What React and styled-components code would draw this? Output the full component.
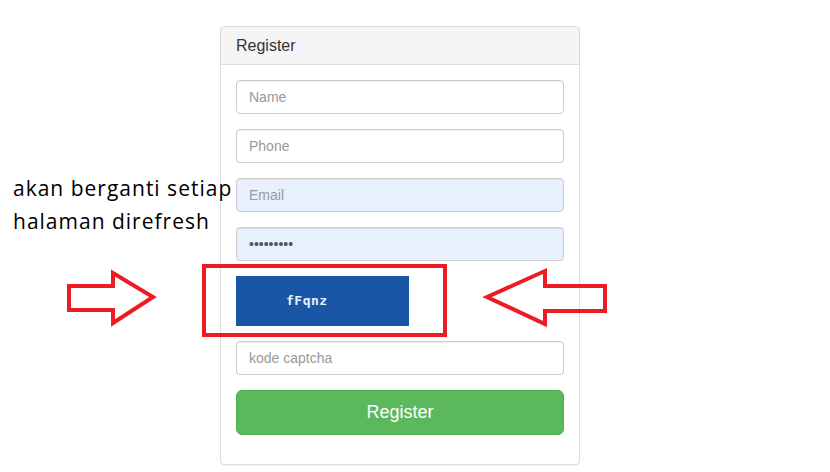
import React from "react";
import styled, { createGlobalStyle } from "styled-components";

const Global = createGlobalStyle`
  html, body { margin: 0; padding: 0; background: #fff; }
  body { width: 830px; height: 472px; overflow: hidden; font-family: "Liberation Sans", Arial, sans-serif; }
  * { box-sizing: border-box; }
`;

const Page = styled.div`
  position: relative;
  width: 830px;
  height: 472px;
  padding: 26px 0 0 220px;
`;

const Panel = styled.div`
  width: 360px;
  border: 1px solid #ddd;
  border-radius: 4px;
  background: #fff;
  box-shadow: 0 1px 1px rgba(0, 0, 0, 0.05);
`;

const PanelHeading = styled.div`
  height: 38px;
  padding: 10px 15px;
  background: #f5f5f5;
  border-bottom: 1px solid #ddd;
  border-radius: 3px 3px 0 0;
  color: #333;
  font-size: 16px;
  line-height: 18px;
`;

const PanelBody = styled.div`
  padding: 15px 15px 29px;
  display: flex;
  flex-direction: column;
  gap: 15px;
`;

const Input = styled.input`
  display: block;
  width: 100%;
  height: 34px;
  padding: 6px 12px;
  font-family: "Liberation Sans", Arial, sans-serif;
  font-size: 14px;
  color: #555;
  background: ${(p) => (p.$autofill ? "#e8f0fe" : "#fff")};
  border: 1px solid #ccc;
  border-radius: 4px;
  box-shadow: inset 0 1px 1px rgba(0, 0, 0, 0.075);
  outline: none;
  &::placeholder { color: #999; }
`;

const Captcha = styled.div`
  width: 173px;
  height: 50px;
  background: #1956a5;
  display: flex;
  align-items: center;
  padding-left: 50px;
  padding-bottom: 2px;
  color: #e4f1ff;
  font-family: "DejaVu Sans Mono", monospace;
  font-weight: bold;
  font-size: 13px;
  letter-spacing: 0.5px;
`;

const Button = styled.button`
  display: block;
  width: 100%;
  height: 45px;
  background: #5cb85c;
  border: 1px solid #4cae4c;
  border-radius: 6px;
  color: #fff;
  font-family: "Liberation Sans", Arial, sans-serif;
  font-size: 18px;
`;

const Note = styled.div`
  position: absolute;
  left: 13px;
  top: 172px;
  font-family: "Open Sans", sans-serif;
  font-size: 21px;
  letter-spacing: 1px;
  line-height: 33px;
  font-variant-ligatures: none;
  color: #000;
`;

const Overlay = styled.svg`
  position: absolute;
  left: 0;
  top: 0;
  pointer-events: none;
`;

export default function App() {
  return (
    <>
      <Global />
      <Page>
        <Panel>
          <PanelHeading>Register</PanelHeading>
          <PanelBody>
            <Input placeholder="Name" />
            <Input placeholder="Phone" />
            <Input placeholder="Email" $autofill />
            <Input type="password" defaultValue="123456789" $autofill />
            <Captcha>fFqnz</Captcha>
            <Input placeholder="kode captcha" />
            <Button>Register</Button>
          </PanelBody>
        </Panel>
        <Note>
          akan berganti setiap
          <br />
          halaman direfresh
        </Note>
        <Overlay width="830" height="472" viewBox="0 0 830 472">
          <g fill="none" stroke="#ed1c24" strokeWidth="4">
            <rect x="204" y="266" width="241" height="69" />
            <polygon points="69,286 113,286 113,273 153,297 113,323 113,310 69,310" strokeLinejoin="miter" />
            <polygon points="487,297 545,271 545,286 605,286 605,311 545,311 545,324" strokeLinejoin="miter" />
          </g>
        </Overlay>
      </Page>
    </>
  );
}
